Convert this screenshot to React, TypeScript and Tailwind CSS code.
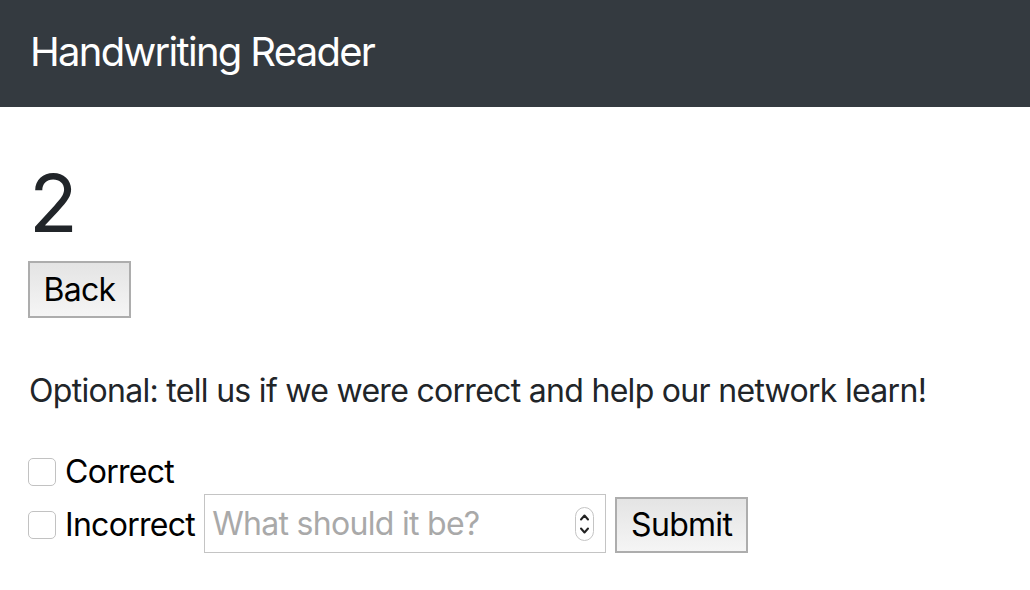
export default function App() {
  return (
    <div className="min-h-screen bg-white text-[#212529] font-['Inter',sans-serif] tracking-[-0.7px]">
      {/* navbar */}
      <header className="h-[107px] bg-[#343a40] px-[30px] flex items-center">
        <span className="text-white text-[40px] leading-none pb-[3px] tracking-[-1.7px]">Handwriting Reader</span>
      </header>

      <main className="px-[28px]">
        <h1 className="mt-[48px] text-[80px] leading-[96px] pl-[1px]">2</h1>

        <button className="mt-[10px] h-[57px] w-[103px] border-2 border-[#adadad] bg-linear-to-b from-[#e4e4e4] to-[#f5f5f5] text-black text-[32px] leading-none">
          Back
        </button>

        <p className="mt-[49px] text-[32px] leading-[48px] pl-[1px]">
          Optional: tell us if we were correct and help our network learn!
        </p>

        <div className="mt-[34px] h-[45px] flex items-center">
          <input
            type="checkbox"
            className="appearance-none w-[28px] h-[28px] border border-[#c2c2c2] rounded-[5px] bg-white"
          />
          <span className="ml-[9px] text-[32px] leading-none text-black">Correct</span>
        </div>

        <div className="h-[59px] flex items-center">
          <input
            type="checkbox"
            className="appearance-none w-[28px] h-[28px] border border-[#c2c2c2] rounded-[5px] bg-white mt-[3px]"
          />
          <span className="ml-[9px] text-[32px] leading-none text-black mt-[3px]">Incorrect</span>

          <div className="ml-[9px] w-[402px] h-[59px] border border-[#c4c4c4] flex items-center pl-[7px] pr-[11px]">
            <input
              type="text"
              placeholder="What should it be?"
              className="flex-1 min-w-0 text-[32px] leading-none outline-none placeholder:text-[#a9a9a9] bg-transparent tracking-[-0.7px]"
            />
            {/* number stepper */}
            <svg width="19" height="34" viewBox="0 0 19 34" className="shrink-0 mt-[1px]">
              <rect x="0.5" y="0.5" width="18" height="33" rx="9" fill="white" stroke="#c4c4c4" strokeWidth="1" />
              <path d="M6 12.5 L9.5 8.5 L13 12.5" fill="none" stroke="#222" strokeWidth="2" strokeLinecap="round" strokeLinejoin="round" />
              <path d="M6 21.5 L9.5 25.5 L13 21.5" fill="none" stroke="#222" strokeWidth="2" strokeLinecap="round" strokeLinejoin="round" />
            </svg>
          </div>

          <button className="ml-[9px] mt-[3px] h-[56px] w-[133px] border-2 border-[#adadad] bg-linear-to-b from-[#e4e4e4] to-[#f5f5f5] text-black text-[32px] leading-none">
            Submit
          </button>
        </div>
      </main>
    </div>
  );
}
